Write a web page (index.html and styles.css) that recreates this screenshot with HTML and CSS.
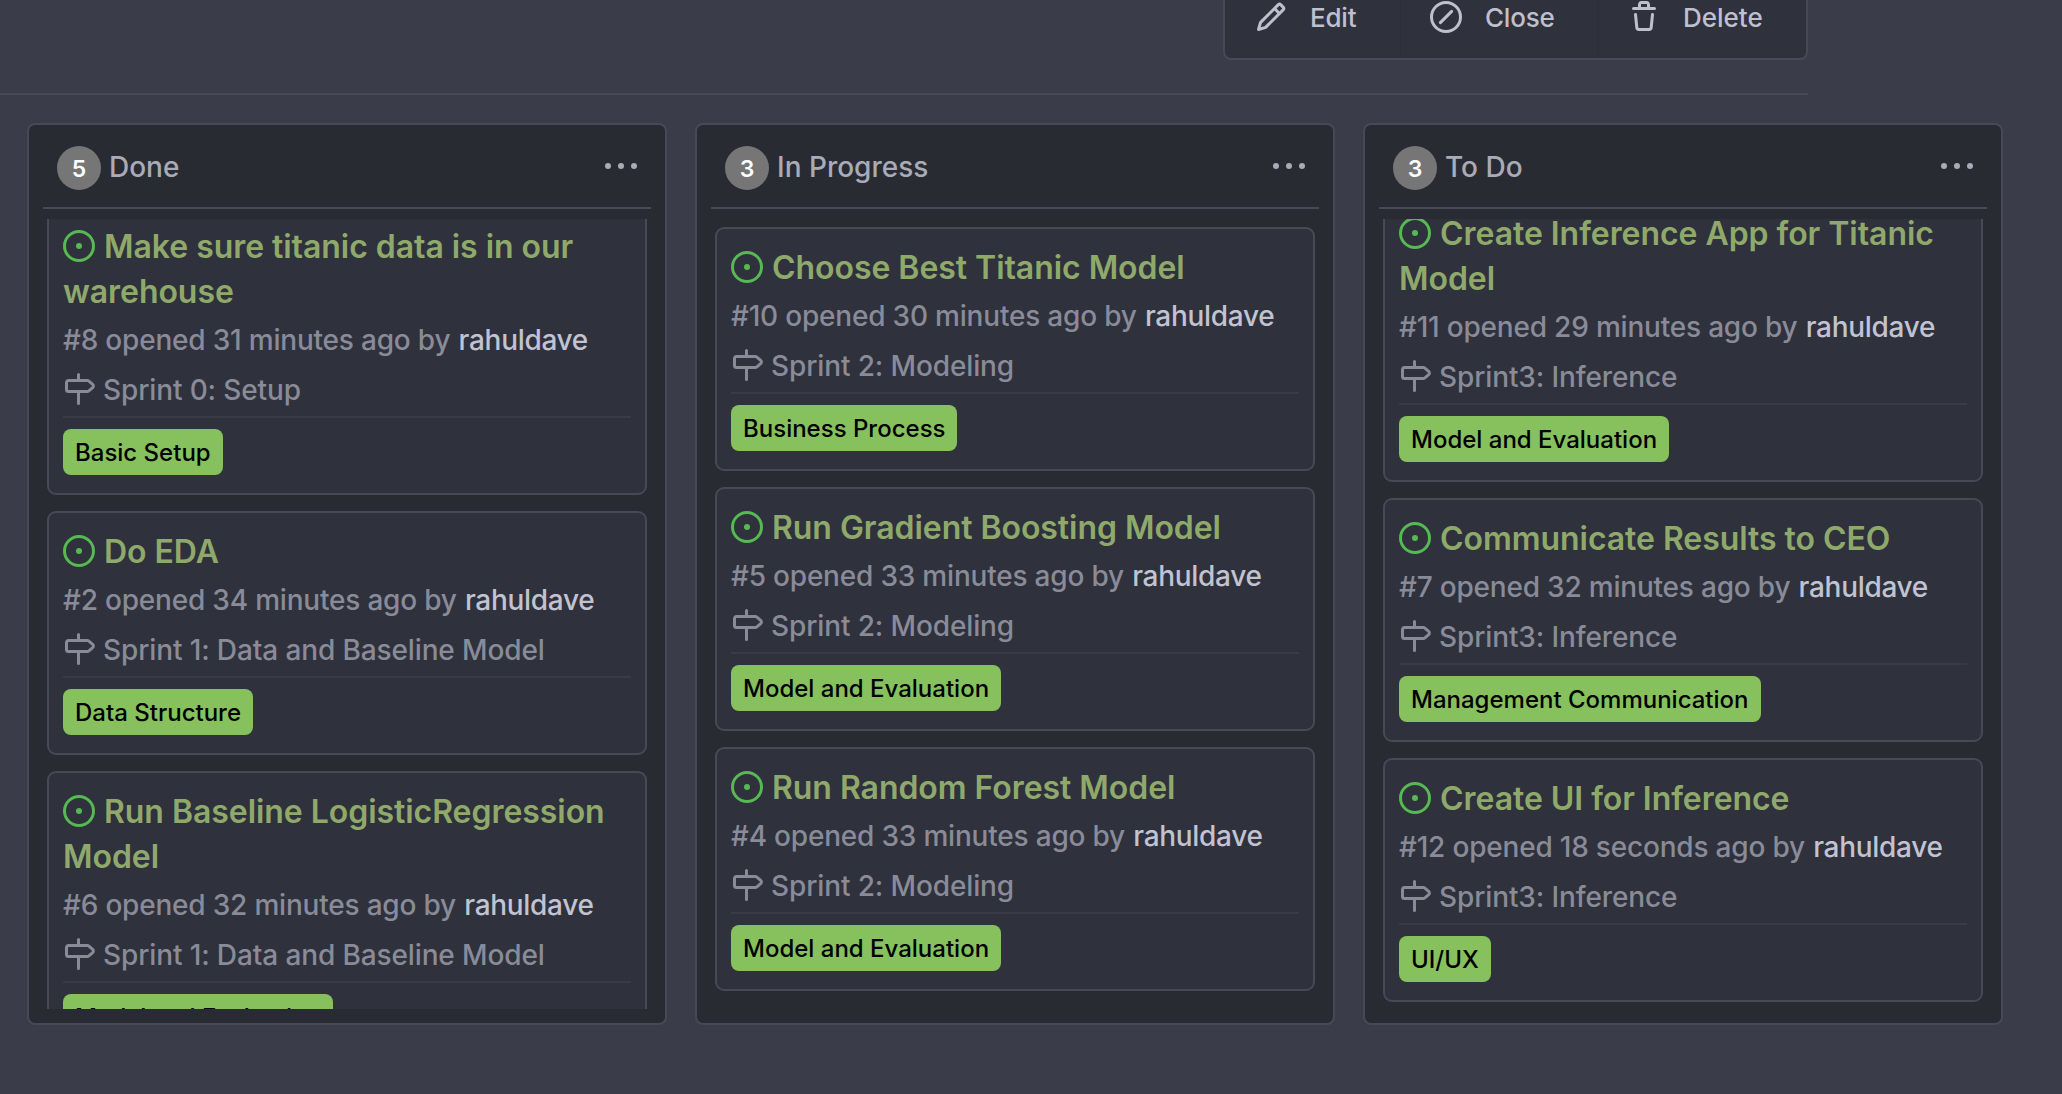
FILE: index.html
```
<!DOCTYPE html>
<html lang="en">
<head>
<meta charset="utf-8">
<title>Project board</title>
<link rel="stylesheet" href="styles.css">
</head>
<body>
<svg class="sprite" aria-hidden="true">
  <symbol id="open" viewBox="0 0 16 16"><circle cx="8" cy="8" r="7.25" fill="none" stroke="currentColor" stroke-width="1.5"/><circle cx="8" cy="8" r="1.5"/></symbol>
  <symbol id="milestone" viewBox="0 0 16 16"><path d="M7.75 0a.75.75 0 0 1 .75.75V3h3.634c.414 0 .814.147 1.13.414l2.07 1.75a1.75 1.75 0 0 1 0 2.672l-2.07 1.75a1.75 1.75 0 0 1-1.13.414H8.5v5.25a.75.75 0 0 1-1.5 0V10H2.75A1.75 1.75 0 0 1 1 8.25v-3.5C1 3.784 1.784 3 2.75 3H7V.75A.75.75 0 0 1 7.75 0Zm4.384 8.5a.25.25 0 0 0 .161-.06l2.07-1.75a.248.248 0 0 0 0-.38l-2.07-1.75a.25.25 0 0 0-.161-.06H2.75a.25.25 0 0 0-.25.25v3.5c0 .138.112.25.25.25h9.384Z"/></symbol>
  <symbol id="kebab" viewBox="0 0 16 16"><circle cx="1.5" cy="8" r="1.5"/><circle cx="8" cy="8" r="1.5"/><circle cx="14.5" cy="8" r="1.5"/></symbol>
  <symbol id="pencil" viewBox="0 0 16 16"><path d="M11.013 1.427a1.75 1.75 0 0 1 2.474 0l1.086 1.086a1.75 1.75 0 0 1 0 2.474l-8.61 8.61c-.21.21-.47.364-.756.445l-3.251.93a.75.75 0 0 1-.927-.928l.929-3.25c.081-.286.235-.547.445-.758l8.61-8.61Zm.176 4.823L9.75 4.81l-6.286 6.287a.253.253 0 0 0-.064.108l-.558 1.953 1.953-.558a.253.253 0 0 0 .108-.064Zm1.238-3.763a.25.25 0 0 0-.354 0L10.811 3.75l1.439 1.44 1.263-1.263a.25.25 0 0 0 0-.354Z"/></symbol>
  <symbol id="slash" viewBox="0 0 16 16"><g fill="none" stroke="currentColor" stroke-width="1.5" stroke-linecap="round"><circle cx="8" cy="8" r="7.25"/><path d="M5.2 10.8 10.8 5.2"/></g></symbol>
  <symbol id="trash" viewBox="0 0 16 16"><path d="M11 1.75V3h2.25a.75.75 0 0 1 0 1.5H2.75a.75.75 0 0 1 0-1.5H5V1.75C5 .784 5.784 0 6.75 0h2.5C10.216 0 11 .784 11 1.75ZM4.496 6.675l.66 6.6a.25.25 0 0 0 .249.225h5.19a.25.25 0 0 0 .249-.225l.66-6.6a.75.75 0 0 1 1.492.149l-.66 6.6A1.748 1.748 0 0 1 10.595 15h-5.19a1.75 1.75 0 0 1-1.741-1.575l-.66-6.6a.75.75 0 1 1 1.492-.15ZM6.5 1.75V3h3V1.75a.25.25 0 0 0-.25-.25h-2.5a.25.25 0 0 0-.25.25Z"/></symbol>
</svg>

<header class="topbar">
  <nav class="actions">
    <a class="action action-edit"><svg class="icon"><use href="#pencil"/></svg>Edit</a>
    <a class="action action-close"><svg class="icon"><use href="#slash"/></svg>Close</a>
    <a class="action action-delete"><svg class="icon"><use href="#trash"/></svg>Delete</a>
  </nav>
</header>

<main class="board">
  <section class="column">
    <div class="column-head"><span class="count">5</span><h2 class="column-title">Done</h2><svg class="icon"><use href="#kebab"/></svg></div>
    <div class="list list-done">
      <article class="card">
        <h3 class="title"><svg class="icon"><use href="#open"/></svg>Make sure titanic data is in our warehouse</h3>
        <p class="meta">#8 opened 31 minutes ago by <a class="user">rahuldave</a></p>
        <p class="sprint"><svg class="icon"><use href="#milestone"/></svg>Sprint 0: Setup</p>
        <div class="labels"><span class="label">Basic Setup</span></div>
      </article>
      <article class="card">
        <h3 class="title"><svg class="icon"><use href="#open"/></svg>Do EDA</h3>
        <p class="meta">#2 opened 34 minutes ago by <a class="user">rahuldave</a></p>
        <p class="sprint"><svg class="icon"><use href="#milestone"/></svg>Sprint 1: Data and Baseline Model</p>
        <div class="labels"><span class="label">Data Structure</span></div>
      </article>
      <article class="card">
        <h3 class="title"><svg class="icon"><use href="#open"/></svg>Run Baseline LogisticRegression Model</h3>
        <p class="meta">#6 opened 32 minutes ago by <a class="user">rahuldave</a></p>
        <p class="sprint"><svg class="icon"><use href="#milestone"/></svg>Sprint 1: Data and Baseline Model</p>
        <div class="labels"><span class="label">Model and Evaluation</span></div>
      </article>
    </div>
  </section>

  <section class="column">
    <div class="column-head"><span class="count">3</span><h2 class="column-title">In Progress</h2><svg class="icon"><use href="#kebab"/></svg></div>
    <div class="list">
      <article class="card">
        <h3 class="title"><svg class="icon"><use href="#open"/></svg>Choose Best Titanic Model</h3>
        <p class="meta">#10 opened 30 minutes ago by <a class="user">rahuldave</a></p>
        <p class="sprint"><svg class="icon"><use href="#milestone"/></svg>Sprint 2: Modeling</p>
        <div class="labels"><span class="label">Business Process</span></div>
      </article>
      <article class="card">
        <h3 class="title"><svg class="icon"><use href="#open"/></svg>Run Gradient Boosting Model</h3>
        <p class="meta">#5 opened 33 minutes ago by <a class="user">rahuldave</a></p>
        <p class="sprint"><svg class="icon"><use href="#milestone"/></svg>Sprint 2: Modeling</p>
        <div class="labels"><span class="label">Model and Evaluation</span></div>
      </article>
      <article class="card">
        <h3 class="title"><svg class="icon"><use href="#open"/></svg>Run Random Forest Model</h3>
        <p class="meta">#4 opened 33 minutes ago by <a class="user">rahuldave</a></p>
        <p class="sprint"><svg class="icon"><use href="#milestone"/></svg>Sprint 2: Modeling</p>
        <div class="labels"><span class="label">Model and Evaluation</span></div>
      </article>
    </div>
  </section>

  <section class="column">
    <div class="column-head"><span class="count">3</span><h2 class="column-title">To Do</h2><svg class="icon"><use href="#kebab"/></svg></div>
    <div class="list list-todo">
      <article class="card">
        <h3 class="title"><svg class="icon"><use href="#open"/></svg>Create Inference App for Titanic Model</h3>
        <p class="meta">#11 opened 29 minutes ago by <a class="user">rahuldave</a></p>
        <p class="sprint"><svg class="icon"><use href="#milestone"/></svg>Sprint3: Inference</p>
        <div class="labels"><span class="label">Model and Evaluation</span></div>
      </article>
      <article class="card">
        <h3 class="title"><svg class="icon"><use href="#open"/></svg>Communicate Results to CEO</h3>
        <p class="meta">#7 opened 32 minutes ago by <a class="user">rahuldave</a></p>
        <p class="sprint"><svg class="icon"><use href="#milestone"/></svg>Sprint3: Inference</p>
        <div class="labels"><span class="label">Management Communication</span></div>
      </article>
      <article class="card">
        <h3 class="title"><svg class="icon"><use href="#open"/></svg>Create UI for Inference</h3>
        <p class="meta">#12 opened 18 seconds ago by <a class="user">rahuldave</a></p>
        <p class="sprint"><svg class="icon"><use href="#milestone"/></svg>Sprint3: Inference</p>
        <div class="labels"><span class="label">UI/UX</span></div>
      </article>
    </div>
  </section>
</main>
</body>
</html>
```
FILE: styles.css
```
* { box-sizing: border-box; }

body {
  margin: 0;
  height: 1094px;
  overflow: hidden;
  background: #3a3c49;
  color: #8a8b98;
  font-family: Inter, "Liberation Sans", sans-serif;
  font-size: 28px;
  font-weight: 450;
}

h2, h3, p { margin: 0; }

.sprite { display: none; }

.icon {
  width: 32px;
  height: 32px;
  fill: currentColor;
  flex: none;
}

/* Project actions */
.topbar {
  display: flex;
  justify-content: flex-end;
  width: 1808px;
  height: 95px;
  border-bottom: 2px solid #474955;
}

.actions {
  display: flex;
  width: 585px;
  height: 60px;
  border: 2px solid #474955;
  border-top: 0;
  border-radius: 0 0 8px 8px;
  background: #2f313d;
}

.action {
  display: flex;
  align-items: center;
  gap: 23px;
  padding: 0 0 24px 30px;
  color: #bfc0cd;
  font-size: 26px;
  letter-spacing: -0.2px;
}

.action + .action { border-left: 1px solid #2c2e39; }
.action-edit { width: 175px; }
.action-close { width: 197px; }
.action.action-close { padding-left: 29px; }
.action-delete { flex: 1; letter-spacing: 0; }

/* Board */
.board {
  display: flex;
  gap: 28px;
  padding: 28px 0 0 27px;
}

.column {
  display: flex;
  flex-direction: column;
  flex: none;
  width: 640px;
  height: 902px;
  padding: 0 14px 14px;
  border: 2px solid #474955;
  border-radius: 8px;
  background: #292b33;
}

.column-head {
  display: flex;
  align-items: center;
  height: 84px;
  padding: 0 14px;
  border-bottom: 2px solid #474955;
  color: #a9abb8;
}

.count {
  display: flex;
  align-items: center;
  justify-content: center;
  width: 44px;
  height: 44px;
  margin: 4px 8px 0 0;
  padding-top: 2px;
  border-radius: 50%;
  background: #767676;
  color: #fff;
  font-size: 23px;
  font-weight: 600;
}

.column-title {
  flex: 1;
  padding-top: 2px;
  font-size: 28px;
  font-weight: 500;
}

.list {
  flex: 1;
  min-height: 0;
  margin-top: 10px;
  padding: 8px 4px 0;
  overflow: hidden;
}

/* Scrolled lists */
.list-done, .list-todo { padding-top: 0; }
.list-done .card:first-child { margin-top: -13px; }
.list-todo .card:first-child { margin-top: -26px; }

.card {
  margin-bottom: 16px;
  padding: 16px 14px 18px;
  border: 2px solid #474955;
  border-radius: 9px;
  background: #2f313d;
}

.title {
  color: #8fa96b;
  font-size: 32px;
  font-weight: 600;
  line-height: 45px;
  letter-spacing: -0.05px;
}

.title .icon {
  margin-right: 9px;
  vertical-align: -4px;
  color: #56b952;
}

.meta {
  margin-top: 6px;
  line-height: 40px;
  letter-spacing: -0.2px;
  white-space: nowrap;
}

.user {
  margin-left: 1px;
  color: #c2c3d1;
  letter-spacing: -0.3px;
}

.sprint {
  margin-top: 10px;
  height: 46px;
  line-height: 40px;
  letter-spacing: -0.12px;
}

.sprint .icon {
  margin-right: 8px;
  vertical-align: -5px;
}

.labels {
  display: flex;
  padding-top: 11px;
  border-top: 2px solid #393b46;
}

.label {
  height: 46px;
  padding: 1px 12px 0;
  border-radius: 8px;
  background: #87c15e;
  color: #000;
  font-size: 24px;
  font-weight: 500;
  line-height: 46px;
}
```
